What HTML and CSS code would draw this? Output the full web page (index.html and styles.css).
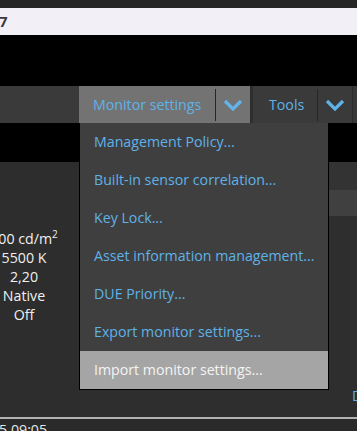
FILE: index.html
```
<!DOCTYPE html>
<html lang="en">
<head>
    <meta charset="UTF-8">
    <meta name="viewport" content="width=device-width, initial-scale=1.0">
    <title>Monitor settings</title>
    <link rel="stylesheet" href="styles.css">
</head>
<body>
    <div class="topstrip"></div>
    <div class="addressbar">7</div>
    <div class="blackband"></div>
    <div class="toolbar">
        <div class="split active">
            <span class="label">Monitor settings</span>
            <span class="sep"></span>
            <span class="chev"><svg width="20" height="12" viewBox="0 0 20 12"><polyline points="2,2 10,10 18,2" fill="none" stroke="#62b4ea" stroke-width="3.2"/></svg></span>
        </div>
        <div class="gap"></div>
        <div class="split tools">
            <span class="label">Tools</span>
            <span class="sep"></span>
            <span class="chev"><svg width="20" height="12" viewBox="0 0 20 12"><polyline points="2,2 10,10 18,2" fill="none" stroke="#5eb2e8" stroke-width="3.2"/></svg></span>
        </div>
        <div class="rest"></div>
    </div>
    <div class="content">
        <div class="headband"></div>
        <div class="body">
            <div class="sidebar">
                <div class="values">
                    <span>100 cd/m<sup>2</sup></span>
                    <span>5500 K</span>
                    <span>2,20</span>
                    <span>Native</span>
                    <span>Off</span>
                </div>
            </div>
            <div class="panel">
                <div class="row1"></div>
                <div class="row2"></div>
                <div class="link">DUE</div>
            </div>
        </div>
    </div>
    <div class="statusline"></div>
    <div class="statusbar">15 09:05</div>

    <ul class="menu">
        <li>Management Policy...</li>
        <li>Built-in sensor correlation...</li>
        <li>Key Lock...</li>
        <li>Asset information management...</li>
        <li>DUE Priority...</li>
        <li>Export monitor settings...</li>
        <li class="hover">Import monitor settings...</li>
    </ul>
</body>
</html>
```
FILE: styles.css
```
*{
    margin:0;
    padding:0;
    box-sizing:border-box;
}
body{
    position:relative;
    width:357px;
    height:431px;
    overflow:hidden;
    background:#2c2c2c;
    font-family:"Open Sans","Noto Sans",sans-serif;
    font-size:14.2px;
    color:#ececec;
}
.topstrip{
    height:8px;
    background:#262626;
}
.addressbar{
    height:27px;
    background:#f3eff6;
    color:#3a3a3d;
    font-weight:bold;
    font-size:15px;
    line-height:27px;
    margin-left:-1px;
}
.blackband{
    height:51px;
    background:#000;
}
.toolbar{
    height:37px;
    display:flex;
    background:#3a3a3a;
    padding-left:79px;
}
.split{
    display:flex;
    align-items:stretch;
    color:#5fb2e8;
}
.split .label{
    display:flex;
    align-items:center;
    padding:0 0 1px 14px;
    white-space:nowrap;
}
.split .sep{
    width:1px;
    background:#262626;
    margin:3px 0 2px 0;
}
.split .chev{
    display:flex;
    align-items:center;
    justify-content:center;
    width:34px;
}
.split.active{
    width:171px;
    background:#737373;
}
.split.active .label{
    flex:1;
}
.gap{
    width:3px;
    background:#2e2e2e;
}
.split.tools{
    width:99px;
}
.split.tools .label{
    flex:1;
    padding-left:16px;
}
.rest{
    flex:1;
    border-left:1px solid #2b2b2b;
    background:#383838;
}
.content{
    height:294px;
    display:flex;
    flex-direction:column;
}
.headband{
    height:39px;
    background:#000;
}
.body{
    flex:1;
    display:flex;
}
.sidebar{
    width:80px;
    background:#2d2d2d;
    padding-top:67px;
}
.values{
    width:48px;
    display:flex;
    flex-direction:column;
    align-items:center;
    line-height:19px;
    white-space:nowrap;
    color:#f0f0f0;
}
.values sup{
    font-size:10px;
    line-height:0;
}
.panel{
    flex:1;
    display:flex;
    flex-direction:column;
    background:#2e2e2e;
    overflow:hidden;
}
.row1{
    height:28px;
    background:#333;
}
.row2{
    height:26px;
    background:#404040;
}
.link{
    margin-top:auto;
    padding:0 0 12px 272px;
    line-height:19px;
    color:#5fb2e8;
    white-space:nowrap;
}
.statusline{
    height:2px;
    background:#b2b2b2;
}
.statusbar{
    height:12px;
    background:#2a2a2a;
    padding-top:1px;
    margin-left:-9px;
    line-height:19px;
    color:#e6e6e6;
    white-space:nowrap;
}
ul.menu{
    position:absolute;
    left:79px;
    top:123px;
    width:250px;
    list-style:none;
    background:#3f3f3f;
    border:1px solid #000;
    border-top:none;
}
ul.menu>li{
    height:38px;
    line-height:38px;
    padding-left:14px;
    color:#5fb2e8;
    white-space:nowrap;
}
ul.menu>li.hover{
    background:#a5a5a5;
    color:#f4f4f4;
}
```
